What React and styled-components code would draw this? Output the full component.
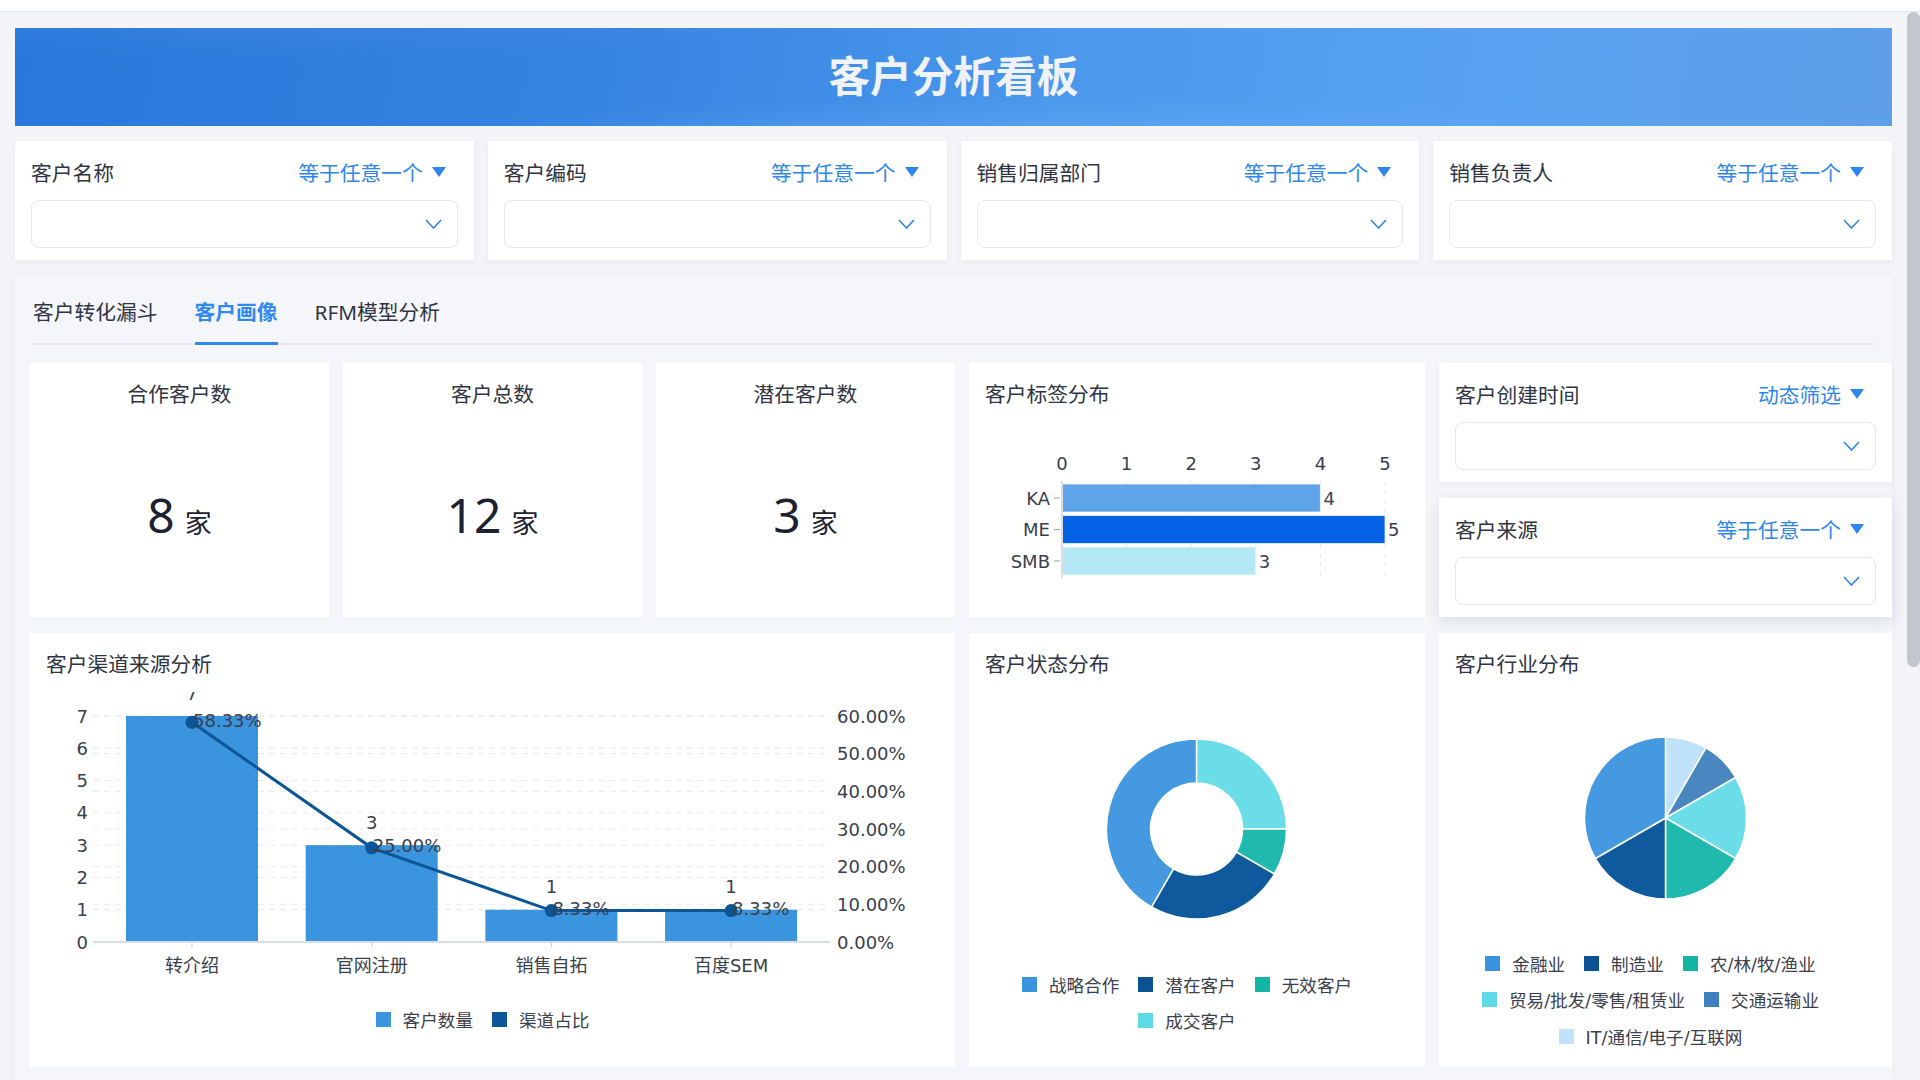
import React from 'react'
import styled, { createGlobalStyle } from 'styled-components'

const GlobalStyle = createGlobalStyle`
  html, body {
    margin: 0;
    height: 100%;
    overflow: hidden;
    background: #f3f4f8;
    font-family: "Noto Sans", "Noto Sans CJK SC", sans-serif;
  }
  * { box-sizing: border-box; }
`

const BLUE = '#2d86ee'

const filters = [
  { label: '客户名称', op: '等于任意一个' },
  { label: '客户编码', op: '等于任意一个' },
  { label: '销售归属部门', op: '等于任意一个' },
  { label: '销售负责人', op: '等于任意一个' },
]

const kpis = [
  { title: '合作客户数', value: 8 },
  { title: '客户总数', value: 12 },
  { title: '潜在客户数', value: 3 },
]

const channel = [
  { name: '转介绍', v: 7, p: 58.33 },
  { name: '官网注册', v: 3, p: 25 },
  { name: '销售自拓', v: 1, p: 8.33 },
  { name: '百度SEM', v: 1, p: 8.33 },
]

const tags = [
  { name: 'KA', v: 4, color: '#5ea4e9' },
  { name: 'ME', v: 5, color: '#0463e4' },
  { name: 'SMB', v: 3, color: '#b4e8f5' },
]

// angles clockwise from 12 o'clock
const status = [
  { a0: 0, a1: 90, color: '#6adde8' },
  { a0: 90, a1: 120, color: '#20b9ae' },
  { a0: 120, a1: 210, color: '#0f5a9c' },
  { a0: 210, a1: 360, color: '#4499e0' },
]
const statusLegend = [
  { name: '战略合作', color: '#3a93de' },
  { name: '潜在客户', color: '#0b5294' },
  { name: '无效客户', color: '#12b5a6' },
  { name: '成交客户', color: '#5fdbe6' },
]

const industry = [
  { a0: 0, a1: 30, color: '#c0e2fb' },
  { a0: 30, a1: 60, color: '#4a87c1' },
  { a0: 60, a1: 120, color: '#6adde8' },
  { a0: 120, a1: 180, color: '#20b9ae' },
  { a0: 180, a1: 240, color: '#0f5a9c' },
  { a0: 240, a1: 360, color: '#4499e0' },
]
const industryLegend = [
  { name: '金融业', color: '#3a93de' },
  { name: '制造业', color: '#0b5294' },
  { name: '农/林/牧/渔业', color: '#12b5a6' },
  { name: '贸易/批发/零售/租赁业', color: '#5fdbe6' },
  { name: '交通运输业', color: '#3f80c0' },
  { name: 'IT/通信/电子/互联网', color: '#c0e2fb' },
]

const arc = (cx, cy, r, r0, a0, a1) => {
  const rad = d => (d * Math.PI) / 180
  const p = (rr, a) => [cx + rr * Math.sin(rad(a)), cy - rr * Math.cos(rad(a))]
  const large = a1 - a0 > 180 ? 1 : 0
  const [x0, y0] = p(r, a0)
  const [x1, y1] = p(r, a1 - 0.0001)
  if (!r0) return `M${cx} ${cy} L${x0} ${y0} A${r} ${r} 0 ${large} 1 ${x1} ${y1} Z`
  const [x2, y2] = p(r0, a1 - 0.0001)
  const [x3, y3] = p(r0, a0)
  return `M${x0} ${y0} A${r} ${r} 0 ${large} 1 ${x1} ${y1} L${x2} ${y2} A${r0} ${r0} 0 ${large} 0 ${x3} ${y3} Z`
}

const Chevron = () => (
  <svg width="17" height="10" viewBox="0 0 17 10">
    <polyline points="1,1 8.5,9 16,1" fill="none" stroke={BLUE} strokeWidth="1.6" />
  </svg>
)

const FilterCard = ({ label, op, raised }) => (
  <Card $raised={raised}>
    <FilterHead>
      <FilterLabel>{label}</FilterLabel>
      <FilterOp>{op}</FilterOp>
    </FilterHead>
    <Select>
      <Chevron />
    </Select>
  </Card>
)

const Legend = ({ items, shift, row, top }) => (
  <LegendWrap $shift={shift} $top={top}>
    {items.map(it => (
      <LegendItem key={it.name} $row={row}>
        <Swatch $color={it.color} />
        {it.name}
      </LegendItem>
    ))}
  </LegendWrap>
)

const ChannelChart = () => {
  const base = 265
  const unit = 226 / 7
  const pUnit = 226 / 60
  const cx = i => 146 + i * 179.7
  const pts = channel.map((d, i) => [cx(i), base - d.p * pUnit])
  return (
    <ChartSvg width="892" height="310" viewBox="0 0 892 310">
      <defs>
        <clipPath id="plotClip">
          <rect x="0" y="15" width="892" height="295" />
        </clipPath>
      </defs>
      {[1, 2, 3, 4, 5, 6, 7].map(k => (
        <line key={'l' + k} x1="47" x2="784" y1={base - k * unit} y2={base - k * unit} stroke="#e8eaef" strokeDasharray="6 5" />
      ))}
      {[1, 2, 3, 4, 5, 6].map(k => (
        <line key={'r' + k} x1="47" x2="784" y1={base - k * 10 * pUnit} y2={base - k * 10 * pUnit} stroke="#e8eaef" strokeDasharray="6 5" />
      ))}
      {[0, 1, 2, 3, 4, 5, 6, 7].map(k => (
        <text key={'yl' + k} x="42" y={base - k * unit} textAnchor="end" dominantBaseline="central">{k}</text>
      ))}
      {[0, 1, 2, 3, 4, 5, 6].map(k => (
        <text key={'yr' + k} x="791" y={base - k * 10 * pUnit} dominantBaseline="central">{k * 10}.00%</text>
      ))}
      {channel.map((d, i) => (
        <rect key={d.name} x={cx(i) - 66} y={base - d.v * unit} width="132" height={d.v * unit} fill="#3a94de" />
      ))}
      <line x1="47" x2="784" y1={base} y2={base} stroke="#d9dde4" strokeWidth="2" />
      {channel.map((d, i) => (
        <g key={'x' + d.name}>
          <line x1={cx(i)} x2={cx(i)} y1={base} y2={base + 5} stroke="#c8ccd4" />
          <text x={cx(i)} y="288" textAnchor="middle" dominantBaseline="central">{d.name}</text>
        </g>
      ))}
      <g clipPath="url(#plotClip)">
        <polyline points={pts.map(p => p.join(',')).join(' ')} fill="none" stroke="#0c5596" strokeWidth="3" />
        {pts.map((p, i) => (
          <circle key={i} cx={p[0]} cy={p[1]} r="6.5" fill="#0c5596" />
        ))}
        {channel.map((d, i) => (
          <text key={'v' + i} x={cx(i)} y={base - d.v * unit - 23} textAnchor="middle" dominantBaseline="central">{d.v}</text>
        ))}
        {channel.map((d, i) => (
          <text key={'p' + i} x={pts[i][0] + 1} y={pts[i][1] - 2} dominantBaseline="central">{d.p.toFixed(2)}%</text>
        ))}
      </g>
    </ChartSvg>
  )
}

const TagChart = () => {
  const x0 = 77
  const unit = 64.6
  const ys = [77, 108.5, 140]
  return (
    <ChartSvg width="423" height="210" viewBox="0 0 423 210">
      {[0, 1, 2, 3, 4, 5].map(k => (
        <text key={k} x={x0 + k * unit} y="56" textAnchor="middle" dominantBaseline="central">{k}</text>
      ))}
      {[1, 2, 3, 4, 5].map(k => (
        <line key={'g' + k} x1={x0 + k * unit} x2={x0 + k * unit} y1="74" y2="171" stroke="#e6e8ed" strokeDasharray="5 4" />
      ))}
      {tags.map((t, i) => (
        <g key={t.name}>
          <rect x={x0} y={ys[i]} width={t.v * unit} height="28" fill={t.color} stroke="rgba(255,255,255,0.7)" />
          <text x={x0 + t.v * unit + 3} y={ys[i] + 14} dominantBaseline="central">{t.v}</text>
          <text x="65" y={ys[i] + 14} textAnchor="end" dominantBaseline="central">{t.name}</text>
          <line x1="69" x2="75" y1={ys[i] + 14} y2={ys[i] + 14} stroke="#9aa0aa" />
        </g>
      ))}
      <line x1={x0} x2={x0} y1="74" y2="171" stroke="#d9dde4" strokeWidth="2" />
    </ChartSvg>
  )
}

const StatusChart = () => (
  <ChartSvg width="423" height="280" viewBox="0 0 423 280">
    {status.map((s, i) => (
      <path key={i} d={arc(211.5, 152, 90, 46, s.a0, s.a1)} fill={s.color} stroke="#fff" strokeWidth="1.5" />
    ))}
  </ChartSvg>
)

const IndustryChart = () => (
  <ChartSvg width="421" height="268" viewBox="0 0 421 268">
    {industry.map((s, i) => (
      <path key={i} d={arc(210.5, 141, 81, 0, s.a0, s.a1)} fill={s.color} stroke="#fff" strokeWidth="1.5" />
    ))}
  </ChartSvg>
)

export default function App() {
  return (
    <Shell>
      <GlobalStyle />
      <TopStrip />
      <Viewport>
        <Main>
          <Page>
            <Banner>
              <BannerTitle>客户分析看板</BannerTitle>
            </Banner>
            <FilterRow>
              {filters.map(f => (
                <FilterCard key={f.label} label={f.label} op={f.op} />
              ))}
            </FilterRow>
            <Panel>
              <TabBar>
                <Tab>客户转化漏斗</Tab>
                <Tab $active>客户画像</Tab>
                <Tab>RFM模型分析</Tab>
              </TabBar>
              <Grid>
                {kpis.map(k => (
                  <KpiCard key={k.title}>
                    <CardTitle $center>{k.title}</CardTitle>
                    <KpiBody>
                      <KpiNum>{k.value}</KpiNum>
                      <KpiUnit>家</KpiUnit>
                    </KpiBody>
                  </KpiCard>
                ))}
                <ChartCard>
                  <CardTitle>客户标签分布</CardTitle>
                  <TagChart />
                </ChartCard>
                <SideStack>
                  <FilterCard label="客户创建时间" op="动态筛选" />
                  <FilterCard label="客户来源" op="等于任意一个" raised />
                </SideStack>
                <ChartCard $wide>
                  <CardTitle>客户渠道来源分析</CardTitle>
                  <ChannelChart />
                  <Legend
                    items={[
                      { name: '客户数量', color: '#3a94de' },
                      { name: '渠道占比', color: '#0c5596' },
                    ]}
                    shift={20}
                    row={46}
                    top={9}
                  />
                </ChartCard>
                <ChartCard>
                  <CardTitle>客户状态分布</CardTitle>
                  <StatusChart />
                  <Legend items={statusLegend} shift={20} row={36} top={9} />
                </ChartCard>
                <ChartCard>
                  <CardTitle>客户行业分布</CardTitle>
                  <IndustryChart />
                  <Legend items={industryLegend} shift={30} row={36.5} top={0} />
                </ChartCard>
              </Grid>
            </Panel>
          </Page>
        </Main>
        <ScrollRail>
          <ScrollThumb />
        </ScrollRail>
      </Viewport>
    </Shell>
  )
}

const Shell = styled.div`
  height: 100vh;
  display: flex;
  flex-direction: column;
`
const TopStrip = styled.div`
  height: 12px;
  flex: none;
  background: #fff;
  border-bottom: 1px solid #e3e5ea;
`
const Viewport = styled.div`
  flex: 1;
  min-height: 0;
  display: flex;
  background: #f3f4f8;
`
const Main = styled.div`
  flex: 1;
  min-width: 0;
  overflow: hidden;
`
const ScrollRail = styled.div`
  width: 13px;
  flex: none;
  background: #f3f4f8;
`
const ScrollThumb = styled.div`
  height: 655px;
  border-radius: 7px;
  background: #c3c6cd;
`
const Page = styled.div`
  padding: 16px 15px 15px;
  display: flex;
  flex-direction: column;
  gap: 15px;
`
const Banner = styled.div`
  height: 98px;
  padding-bottom: 5px;
  display: flex;
  align-items: center;
  justify-content: center;
  background:
    radial-gradient(ellipse 45% 90% at 15% -30%, rgba(255, 255, 255, 0.07), transparent 70%),
    radial-gradient(ellipse 50% 70% at 55% 120%, rgba(120, 190, 255, 0.35), transparent 70%),
    linear-gradient(100deg, #2878dc 0%, #3483e0 30%, #4a97ec 55%, #59a2f1 78%, #5d9fe8 100%);
`
const BannerTitle = styled.h1`
  margin: 0;
  font-family: "Noto Sans CJK SC", sans-serif;
  font-size: 41.7px;
  font-weight: 700;
  color: #eff2f6;
  line-height: 1;
`
const FilterRow = styled.div`
  display: flex;
  gap: 14px;
  & > * {
    flex: 1;
  }
`
const Card = styled.div`
  background: #fff;
  padding: 18px 16px 12px;
  height: 119px;
  box-shadow: ${p => (p.$raised ? '0 4px 14px rgba(30, 40, 80, 0.12)' : '0 2px 6px rgba(30, 40, 80, 0.05)')};
`
const FilterHead = styled.div`
  height: 26px;
  display: flex;
  align-items: center;
  justify-content: space-between;
  padding-right: 12px;
`
const FilterLabel = styled.span`
  font-size: 20.75px;
  color: #2f3542;
`
const FilterOp = styled.span`
  display: flex;
  align-items: center;
  gap: 9px;
  font-size: 20.75px;
  color: ${BLUE};
  &::after {
    content: '';
    width: 0;
    height: 0;
    border-left: 7.5px solid transparent;
    border-right: 7.5px solid transparent;
    border-top: 10px solid ${BLUE};
  }
`
const Select = styled.div`
  margin-top: 15px;
  height: 48px;
  border: 1px solid #e3e6ec;
  border-radius: 8px;
  display: flex;
  align-items: center;
  justify-content: flex-end;
  padding-right: 15px;
`
const Panel = styled.div`
  background: #f5f6f9;
  box-shadow: 0 0 6px rgba(30, 40, 80, 0.04);
  padding: 22px 0 20px 15px;
  min-height: 900px;
`
const TabBar = styled.div`
  display: flex;
  gap: 37px;
  margin: 0 18px 18px 3px;
  border-bottom: 2px solid #e4e7ed;
`
const Tab = styled.div`
  position: relative;
  line-height: 30px;
  padding-bottom: 16px;
  font-size: 20.75px;
  color: ${p => (p.$active ? '#2f88f4' : '#2f3542')};
  font-weight: ${p => (p.$active ? 700 : 400)};
  &::after {
    content: '';
    display: ${p => (p.$active ? 'block' : 'none')};
    position: absolute;
    left: 0;
    right: 0;
    bottom: -2px;
    height: 3px;
    background: #2f88f4;
  }
`
const Grid = styled.div`
  display: grid;
  grid-template-columns: 299px 299px 299px 456px 453px;
  grid-template-rows: 254px 434px;
  column-gap: 14px;
  row-gap: 16px;
`
const KpiCard = styled.div`
  background: #fff;
  padding-top: 18px;
  display: flex;
  flex-direction: column;
`
const CardTitle = styled.div`
  font-size: 20.75px;
  line-height: 26px;
  color: #2f3542;
  text-align: ${p => (p.$center ? 'center' : 'left')};
`
const KpiBody = styled.div`
  display: flex;
  align-items: baseline;
  justify-content: center;
  gap: 10px;
  padding-top: 84px;
`
const KpiNum = styled.span`
  font-family: "Noto Sans", sans-serif;
  font-size: 48px;
  line-height: 1;
  color: #1c2230;
`
const KpiUnit = styled.span`
  font-family: "Noto Sans CJK SC", sans-serif;
  font-size: 27px;
  line-height: 1;
  color: #1c2230;
`
const ChartCard = styled.div`
  background: #fff;
  padding: 18px 16px 0;
  display: flex;
  flex-direction: column;
  grid-column: ${p => (p.$wide ? '1 / 4' : 'auto')};
`
const SideStack = styled.div`
  display: flex;
  flex-direction: column;
  gap: 16px;
`
const ChartSvg = styled.svg`
  display: block;
  flex: none;
  font-family: "DejaVu Sans", "Noto Sans CJK SC", sans-serif;
  font-size: 18px;
  fill: #3a404c;
`
const LegendWrap = styled.div`
  display: flex;
  flex-wrap: wrap;
  justify-content: center;
  column-gap: 19px;
  padding-right: ${p => p.$shift}px;
  margin-top: ${p => p.$top}px;
`
const LegendItem = styled.div`
  display: flex;
  align-items: center;
  gap: 12px;
  height: ${p => p.$row}px;
  font-family: "DejaVu Sans", "Noto Sans CJK SC", sans-serif;
  font-size: 17.6px;
  color: #3a404c;
`
const Swatch = styled.span`
  width: 15px;
  height: 15px;
  background: ${p => p.$color};
`
